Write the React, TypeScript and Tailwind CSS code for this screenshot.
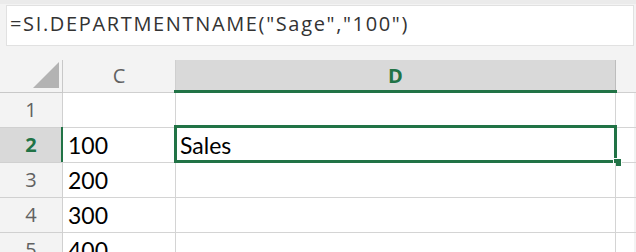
import React from 'react';

const rows = [
    { n: 1, c: '', d: '' },
    { n: 2, c: '100', d: 'Sales' },
    { n: 3, c: '200', d: '' },
    { n: 4, c: '300', d: '' },
    { n: 5, c: '400', d: '' },
];

const cellFont = { fontFamily: 'Lato, "Liberation Sans", sans-serif' };
const uiFont = { fontFamily: '"Open Sans", "Noto Sans", sans-serif' };

export default function App() {
    return (
        <div className="w-[636px] h-[252px] overflow-hidden bg-[#f3f3f3] flex flex-col" style={uiFont}>
            {/* formula bar */}
            <div className="shrink-0 h-[60px] flex flex-col border-t-[4px] border-[#ebebeb]">
                <div className="ml-[6px] mr-[2px] mt-[1px] h-[41px] bg-white border border-[#e1e1e1] flex items-center pl-[3px] pb-[4px]">
                    <span className="text-[20px] text-[#333333] tracking-[1.65px]">=SI.DEPARTMENTNAME("Sage","100")</span>
                </div>
            </div>

            {/* sheet */}
            <div className="shrink-0 grid grid-cols-[63px_113px_440px_20px]">
                {/* header row */}
                <div className="h-[33px] bg-[#f3f3f3] border-r border-b border-[#c8c8c8] flex items-end justify-end pr-[3px] pb-[4px]">
                    <div className="w-0 h-0 border-l-[26px] border-l-transparent border-b-[26px] border-b-[#b3b3b3]" />
                </div>
                <div className="h-[33px] bg-[#f3f3f3] border-r border-b border-[#cfcfcf] flex items-center justify-center text-[20px] text-[#616161]">
                    C
                </div>
                <div className="relative h-[33px] bg-[#d9d9d9] border-r border-b border-[#bdbdbd] flex items-center justify-center text-[20px] font-bold text-[#217346]">
                    D
                    <div className="absolute left-[-2px] right-[-2px] bottom-[-1px] h-[3px] bg-[#217346]" />
                </div>
                <div className="h-[33px] bg-[#f3f3f3] border-b border-[#cfcfcf]" />

                {rows.map((r) => {
                    const sel = r.n === 2;
                    return (
                        <React.Fragment key={r.n}>
                            <div
                                className={`relative h-[35px] border-r border-b border-[#d0d0d0] flex items-center justify-center text-[20px] ${
                                    sel ? 'bg-[#d9d9d9] text-[#217346] font-bold' : 'bg-[#f3f3f3] text-[#616161]'
                                }`}
                            >
                                {r.n}
                                {sel && <div className="absolute right-[-1px] top-[-1px] bottom-0 w-[2px] bg-[#217346]" />}
                            </div>
                            <div className="h-[35px] bg-white border-r border-b border-[#d4d4d4] flex items-end pl-[5px] pb-[5px] text-[23px] leading-[23px] text-black" style={cellFont}>
                                {r.c}
                            </div>
                            <div className="relative h-[35px] bg-white border-r border-b border-[#d4d4d4] flex items-end pl-[4px] pb-[5px] text-[23px] leading-[23px] text-black" style={cellFont}>
                                {r.d}
                                {sel && (
                                    <div className="absolute left-[-2px] top-[-3px] w-[443px] h-[38px] border-[3px] border-[#217346]">
                                        <div className="absolute left-[436px] top-[30px] w-[9px] h-[9px] bg-[#217346] border border-white" />
                                    </div>
                                )}
                            </div>
                            <div className="h-[35px] bg-white border-b border-[#d4d4d4] flex justify-end">
                                <div className="w-[2px] h-full bg-[#f3f3f3]" />
                            </div>
                        </React.Fragment>
                    );
                })}
            </div>
        </div>
    );
}
